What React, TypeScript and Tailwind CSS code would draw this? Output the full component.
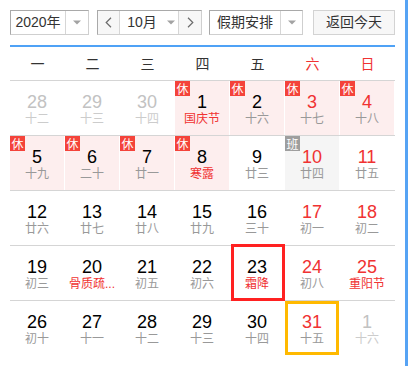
import React from "react";

type Cell = {
  d: number;
  l: string;
  other?: boolean;
  red?: boolean;
  lred?: boolean;
  badge?: "休" | "班";
  pink?: boolean;
  gray?: boolean;
  sel?: boolean;
  today?: boolean;
};

const rows: Cell[][] = [
  [
    { d: 28, l: "十二", other: true },
    { d: 29, l: "十三", other: true },
    { d: 30, l: "十四", other: true },
    { d: 1, l: "国庆节", lred: true, badge: "休", pink: true },
    { d: 2, l: "十六", badge: "休", pink: true },
    { d: 3, l: "十七", red: true, badge: "休", pink: true },
    { d: 4, l: "十八", red: true, badge: "休", pink: true },
  ],
  [
    { d: 5, l: "十九", badge: "休", pink: true },
    { d: 6, l: "二十", badge: "休", pink: true },
    { d: 7, l: "廿一", badge: "休", pink: true },
    { d: 8, l: "寒露", lred: true, badge: "休", pink: true },
    { d: 9, l: "廿三" },
    { d: 10, l: "廿四", red: true, badge: "班", gray: true },
    { d: 11, l: "廿五", red: true },
  ],
  [
    { d: 12, l: "廿六" },
    { d: 13, l: "廿七" },
    { d: 14, l: "廿八" },
    { d: 15, l: "廿九" },
    { d: 16, l: "三十" },
    { d: 17, l: "初一", red: true },
    { d: 18, l: "初二", red: true },
  ],
  [
    { d: 19, l: "初三" },
    { d: 20, l: "骨质疏...", lred: true },
    { d: 21, l: "初五" },
    { d: 22, l: "初六" },
    { d: 23, l: "霜降", lred: true, sel: true },
    { d: 24, l: "初八", red: true },
    { d: 25, l: "重阳节", red: true, lred: true },
  ],
  [
    { d: 26, l: "初十" },
    { d: 27, l: "十一" },
    { d: 28, l: "十二" },
    { d: 29, l: "十三" },
    { d: 30, l: "十四" },
    { d: 31, l: "十五", red: true, today: true },
    { d: 1, l: "十六", other: true },
  ],
];

const weekdays = ["一", "二", "三", "四", "五", "六", "日"];

const Tri = () => (
  <svg width="8" height="5" viewBox="0 0 8 5">
    <path d="M0 0.5 L8 0.5 L4 4.5 Z" fill="#a3a3a3" />
  </svg>
);

const Chev = ({ dir }: { dir: "l" | "r" }) => (
  <svg width="7" height="11" viewBox="0 0 7 11">
    <path
      d={dir === "l" ? "M6 0.8 L1.2 5.5 L6 10.2" : "M1 0.8 L5.8 5.5 L1 10.2"}
      fill="none"
      stroke="#6b6b6b"
      strokeWidth="1.2"
    />
  </svg>
);

function DayCell({ c }: { c: Cell }) {
  const numColor = c.other
    ? "text-[#c2c2c2]"
    : c.red
    ? "text-[#f03232]"
    : "text-[#000000]";
  const lunColor = c.other
    ? "text-[#cccccc]"
    : c.lred
    ? "text-[#f03232]"
    : "text-[#999999]";
  const bg = c.pink ? "bg-[#fdeeee]" : c.gray ? "bg-[#f5f5f5]" : "bg-white";
  return (
    <div className="relative h-[54px]">
      <div className={`mr-[1px] h-[54px] ${bg} flex flex-col items-center pt-[11px]`}>
        <div
          className={`text-[18px] leading-[20px] ${numColor}`}
          style={{ fontFamily: '"Liberation Sans", Arial, sans-serif' }}
        >
          {c.d}
        </div>
        <div
          className={`text-[12px] leading-[16px] -mt-[1px] whitespace-nowrap ${lunColor}`}
          style={{ fontFamily: '"Liberation Sans", "Noto Sans CJK SC", sans-serif' }}
        >
          {c.l}
        </div>
      </div>
      {c.badge && (
        <div
          className={`absolute left-0 top-0 w-[15px] h-[15px] flex items-center justify-center text-white text-[12px] leading-[15px] ${
            c.badge === "休" ? "bg-[#f4433a]" : "bg-[#9e9e9e]"
          }`}
          style={{ fontFamily: '"Noto Sans CJK SC", sans-serif' }}
        >
          {c.badge}
        </div>
      )}
      {c.sel && (
        <div className="absolute left-[1px] -top-[2px] -bottom-[1px] w-[54px] border-[3px] border-[#ff2121]" />
      )}
      {c.today && (
        <div className="absolute left-0 top-0 w-[54px] h-[54px] border-[3px] border-[#ffb900]" />
      )}
    </div>
  );
}

export default function App() {
  return (
    <div
      className="w-[408px] h-[366px] bg-white border-r-[3px] border-[#56a3f4] box-border overflow-hidden"
      style={{ fontFamily: '"Liberation Sans", "Noto Sans CJK SC", sans-serif' }}
    >
      <div className="px-[10px] pt-[10px]">
        {/* header controls */}
        <div className="flex h-[25px] text-[14px] text-[#333333]">
          <div className="flex w-[79px] h-[25px] border border-t-[#a9a9a9] border-l-[#a9a9a9] border-r-[#cfcfcf] border-b-[#cfcfcf] bg-white">
            <div className="w-[54px] flex items-center justify-center leading-[23px]">2020年</div>
            <div className="flex-1 border-l border-[#d6d6d6] flex items-center justify-center">
              <Tri />
            </div>
          </div>
          <div className="flex ml-[8px] w-[105px] h-[25px] border border-t-[#a9a9a9] border-l-[#a9a9a9] border-r-[#cfcfcf] border-b-[#cfcfcf] bg-white">
            <div className="w-[21px] bg-[#f7f7f7] flex items-center justify-center">
              <Chev dir="l" />
            </div>
            <div className="w-[60px] border-l border-r border-[#d6d6d6] flex items-center justify-center gap-[10px] pl-[4px] leading-[23px]">
              <span>10月</span>
              <Tri />
            </div>
            <div className="flex-1 bg-[#f7f7f7] flex items-center justify-center">
              <Chev dir="r" />
            </div>
          </div>
          <div className="flex ml-[7px] w-[94px] h-[25px] border border-t-[#a9a9a9] border-l-[#a9a9a9] border-r-[#cfcfcf] border-b-[#cfcfcf] bg-white">
            <div className="w-[70px] flex items-center justify-center leading-[23px]">假期安排</div>
            <div className="flex-1 border-l border-[#d6d6d6] flex items-center justify-center">
              <Tri />
            </div>
          </div>
          <div className="ml-[10px] w-[82px] h-[25px] border border-[#d3d3d3] bg-[#f7f7f7] flex items-center justify-center leading-[23px]">
            返回今天
          </div>
        </div>

        {/* blue line */}
        <div className="mt-[10px] h-[2px] bg-[#4fa2f6]" />

        {/* weekday header */}
        <div className="grid grid-cols-7 h-[33px] items-center text-center text-[14px]">
          {weekdays.map((w, i) => (
            <div
              key={w}
              className={i >= 5 ? "text-[#f03232]" : "text-[#333333]"}
              style={{ fontFamily: '"Noto Sans CJK SC", sans-serif' }}
            >
              {w}
            </div>
          ))}
        </div>

        {/* day rows */}
        {rows.map((r, ri) => (
          <div key={ri} className="grid grid-cols-7 border-t border-[#d5d5d5]">
            {r.map((c, ci) => (
              <DayCell key={ci} c={c} />
            ))}
          </div>
        ))}
      </div>
    </div>
  );
}
